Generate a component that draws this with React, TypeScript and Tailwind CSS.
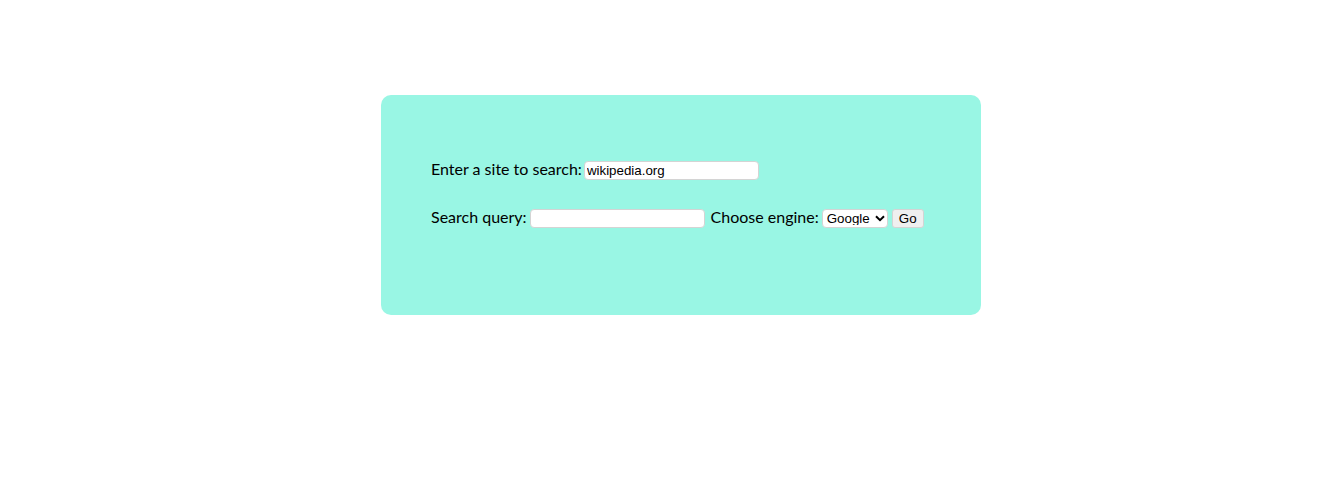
import React from "react";

export default function App() {
  return (
    <div className="min-h-[486px] w-full bg-white pt-[95px] pl-[381px]">
      <div className="w-[600px] h-[220px] rounded-[10px] bg-[#99f6e4] pt-[66px] pl-[50px] text-black">
        <div className="flex items-center h-[19px] font-['Lato',_sans-serif] text-[16px] leading-none">
          <span className="relative -top-[2px]">Enter a site to search:</span>
          <input
            type="text"
            defaultValue="wikipedia.org"
            className="ml-[2px] w-[175px] h-[19px] rounded-[4px] border border-[#d4d4d4] bg-white px-[2px] font-['Liberation_Sans',_Arial,_sans-serif] text-[13.33px] text-black outline-none"
          />
        </div>
        <div className="mt-[29px] flex items-center h-[19px] font-['Lato',_sans-serif] text-[16px] leading-none">
          <span className="relative -top-[2px]">Search query:</span>
          <input
            type="text"
            className="ml-[3px] w-[175px] h-[19px] rounded-[4px] border border-[#d4d4d4] bg-white px-[2px] font-['Liberation_Sans',_Arial,_sans-serif] text-[13.33px] text-black outline-none"
          />
          <span className="relative -top-[2px] ml-[6px]">Choose engine:</span>
          <div className="relative ml-[3px] h-[19px] w-[66px]">
            <select className="h-[19px] w-[66px] appearance-none rounded-[4px] border border-[#d4d4d4] bg-white pl-[4px] font-['Liberation_Sans',_Arial,_sans-serif] text-[13.33px] leading-none text-black outline-none">
              <option>Google</option>
              <option>Bing</option>
            </select>
            <svg
              className="pointer-events-none absolute right-[3px] top-[6px]"
              width="10"
              height="7"
              viewBox="0 0 10 7"
            >
              <path d="M1 1.2 L5 5.2 L9 1.2" fill="none" stroke="#000" strokeWidth="2" />
            </svg>
          </div>
          <button className="ml-[4px] h-[19px] w-[32px] rounded-[3px] border border-[#d4d4d4] bg-[#efefef] font-['Liberation_Sans',_Arial,_sans-serif] text-[13.33px] leading-none text-black">
            Go
          </button>
        </div>
      </div>
    </div>
  );
}
